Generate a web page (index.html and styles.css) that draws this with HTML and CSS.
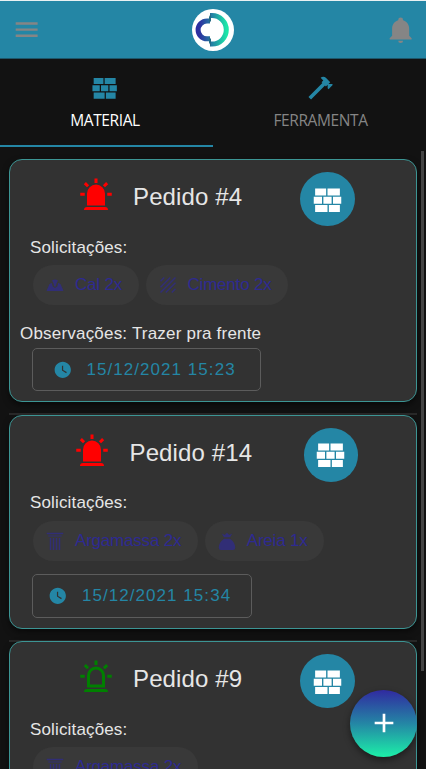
FILE: index.html
```html
<!DOCTYPE html>
<html lang="pt-BR">
<head>
<meta charset="utf-8">
<title>Pedidos</title>
<link rel="stylesheet" href="styles.css">
</head>
<body>
<svg class="defs" width="0" height="0" aria-hidden="true">
  <symbol id="wall" viewBox="0 0 24 24"><path d="M3,16H12V21H3V16M2,10H8V15H2V10M9,10H15V15H9V10M16,10H22V15H16V10M13,16H21V21H13V16M3,4H11V9H3V4M12,4H21V9H12V4Z"/></symbol>
  <symbol id="alarm" viewBox="0 0 24 24"><path d="M6,6.9L3.87,4.78L5.28,3.37L7.4,5.5L6,6.9M13,1V4H11V1H13M20.13,4.78L18,6.9L16.6,5.5L18.72,3.37L20.13,4.78M4.5,10.5V12.5H1.5V10.5H4.5M19.5,10.5H22.5V12.5H19.5V10.5M6,20H18A2,2 0 0,1 20,22H4A2,2 0 0,1 6,20M12,5A6,6 0 0,1 18,11V19H6V11A6,6 0 0,1 12,5Z"/></symbol>
  <symbol id="alarm-outline" viewBox="0 0 24 24"><path fill-rule="evenodd" d="M6,6.9L3.87,4.78L5.28,3.37L7.4,5.5L6,6.9M13,1V4H11V1H13M20.13,4.78L18,6.9L16.6,5.5L18.72,3.37L20.13,4.78M4.5,10.5V12.5H1.5V10.5H4.5M19.5,10.5H22.5V12.5H19.5V10.5M6,20H18A2,2 0 0,1 20,22H4A2,2 0 0,1 6,20M12,5A6,6 0 0,1 18,11V19H6V11A6,6 0 0,1 12,5M12,7A4,4 0 0,0 8,11V17H16V11A4,4 0 0,0 12,7Z"/></symbol>
  <symbol id="clock" viewBox="0 0 24 24"><path d="M12 2C6.5 2 2 6.5 2 12S6.5 22 12 22 22 17.5 22 12 17.5 2 12 2M16.2 16.2L11 13V7H12.5V12.2L17 14.9L16.2 16.2Z"/></symbol>
  <symbol id="pillar" viewBox="0 0 24 24"><path d="M1 1H23V3H1ZM3 4.500H21V6H3ZM5 8H7V24H5ZM9 8H11V24H9ZM13 8H15V24H13ZM17 8H19V24H17Z"/></symbol>
  <symbol id="sack" viewBox="0 0 24 24"><path d="M5 2L9 4L12 1L15 4L19 2L16 7H8ZM8 9H16C21 12 23 17 23 21Q23 24 20 24H4Q1 24 1 21C1 17 3 12 8 9Z"/></symbol>
  <symbol id="lime" viewBox="0 0 24 24"><path d="M1 19L4.500 11L7.500 9L9 14L12 16L15 14L16.500 9L19.500 11L23 19V20H1ZM8 6Q12 3 16 6L14 10L13 14H11L10 10Z"/></symbol>
  <symbol id="texture" viewBox="0 0 24 24"><path fill="none" stroke="currentColor" stroke-width="2" d="M2 22L22 2M2 15L15 2M9 22L22 9M2 7L7 2M17 22L22 17"/></symbol>
</svg>

<header class="bar">
  <svg class="icon-bar" viewBox="0 0 24 24"><path d="M3,6H21V8H3V6M3,11H21V13H3V11M3,16H21V18H3V16Z"/></svg>
  <svg class="logo" viewBox="0 0 42 42">
    <defs><linearGradient id="brand" gradientUnits="userSpaceOnUse" x1="3" y1="0" x2="38" y2="0"><stop offset="0" stop-color="#2e2aa0"/><stop offset=".15" stop-color="#2c35a0"/><stop offset=".5" stop-color="#2484a4"/><stop offset=".9" stop-color="#1ce6a8"/></linearGradient></defs>
    <circle cx="21" cy="21" r="21" fill="#fff"/>
    <path fill="none" stroke="url(#brand)" stroke-width="5" d="M18 12H15A8.900 8.900 0 0 0 15 29.800H18M18 6.500H20A14.300 14.300 0 0 1 20 35.100H18"/>
    <path fill="#246b84" d="M17 8L19 4V12L17 14ZM17 28L19 30V37.500L17 33.500Z"/>
  </svg>
  <svg class="icon-bar" viewBox="0 0 24 24"><path d="M21,19V20H3V19L5,17V11C5,7.900 7.030,5.170 10,4.290V4A2,2 0 0,1 14,4V4.290C16.970,5.170 19,7.900 19,11V17L21,19M14,21A2,2 0 0,1 10,21Z"/></svg>
</header>

<nav class="tabs">
  <div class="tab tab-active"><svg class="icon-tab"><use href="#wall"/></svg><span>MATERIAL</span></div>
  <div class="tab"><svg class="icon-tab" viewBox="0 0 24 24"><path d="M2 19.630L13.430 8.200L12.720 7.500L14.140 6.070L12 3.890C13.200 2.700 15.090 2.700 16.270 3.890L19.870 7.500L18.450 8.910H21.290L22 9.620L18.450 13.210L17.740 12.500V9.620L16.270 11.040L15.560 10.330L4.130 21.760L2 19.630Z"/></svg><span>FERRAMENTA</span></div>
</nav>

<main class="list">
  <article class="card card-first">
    <div class="head"><svg class="alarm urgent"><use href="#alarm"/></svg><h2>Pedido #4</h2><span class="avatar"><svg><use href="#wall"/></svg></span></div>
    <p class="label">Solicitações:</p>
    <div class="chips">
      <span class="chip"><svg><use href="#lime"/></svg>Cal 2x</span>
      <span class="chip"><svg><use href="#texture"/></svg>Cimento 2x</span>
    </div>
    <p class="note">Observações: Trazer pra frente</p>
    <div class="date date-wide"><svg><use href="#clock"/></svg>15/12/2021 15:23</div>
  </article>
  <hr>
  <article class="card card-second">
    <div class="head head-long"><svg class="alarm urgent"><use href="#alarm"/></svg><h2>Pedido #14</h2><span class="avatar"><svg><use href="#wall"/></svg></span></div>
    <p class="label">Solicitações:</p>
    <div class="chips">
      <span class="chip"><svg><use href="#pillar"/></svg>Argamassa 2x</span>
      <span class="chip"><svg><use href="#sack"/></svg>Areia 1x</span>
    </div>
    <div class="date"><svg><use href="#clock"/></svg>15/12/2021 15:34</div>
  </article>
  <hr>
  <article class="card card-third">
    <div class="head"><svg class="alarm calm"><use href="#alarm-outline"/></svg><h2>Pedido #9</h2><span class="avatar"><svg><use href="#wall"/></svg></span></div>
    <p class="label">Solicitações:</p>
    <div class="chips">
      <span class="chip"><svg><use href="#pillar"/></svg>Argamassa 2x</span>
    </div>
  </article>
</main>
<div class="scrollbar"></div>
<button class="fab" aria-label="Adicionar"><svg viewBox="0 0 24 24"><path d="M19,13H13V19H11V13H5V11H11V5H13V11H19V13Z"/></svg></button>
</body>
</html>
```

FILE: styles.css
```css
* { box-sizing: border-box; }
body {
  margin: 0;
  height: 769px;
  display: flex;
  flex-direction: column;
  overflow: hidden;
  position: relative;
  background: #121212;
  color: #e6e6e6;
  font: 17px/24px "Liberation Sans", Arial, sans-serif;
}
svg { display: block; flex: none; fill: currentColor; }
.defs { position: absolute; }
h2, p { margin: 0; font-weight: 400; }

.bar {
  flex: none;
  height: 59px;
  padding: 0 11px 0 12px;
  display: flex;
  align-items: center;
  justify-content: space-between;
  background: #2486a5;
  border-top: 1px solid #e9f1f3;
  border-bottom: 1px solid #1d566a;
  color: #858585;
}
.icon-bar { width: 29.300px; height: 29.300px; }
.logo { width: 42px; height: 42px; margin-right: 2px; }

.tabs { flex: none; height: 88px; display: grid; grid-template-columns: 1fr 1fr; }
.tab {
  display: flex;
  flex-direction: column;
  align-items: center;
  padding-top: 14px;
  border-bottom: 2.500px solid transparent;
  color: #858585;
  font: 15.500px/20px "Open Sans", "Noto Sans", sans-serif;
  letter-spacing: -.4px;
}
.tab:last-child { padding-left: 2px; }
.tab-active { color: #fff; border-bottom-color: #2486a5; padding-right: 3px; }
.tab span { margin-top: 8px; }
.icon-tab { width: 29.300px; height: 29.300px; color: #2486a5; }

.list { flex: 1; min-height: 0; overflow: hidden; padding: 12px 9px 0; }
.card {
  background: #323232;
  border: 1px solid #3c9594;
  border-radius: 13px;
  box-shadow: 0 3px 6px rgba(0, 0, 0, .5);
}
.card-first { height: 243px; }
.card-second { height: 214px; }
.card-third { height: 243px; }
hr { margin: 11px 0 0; border: 0; height: 2px; background: #292929; }
.card-third { margin-top: -1px; }

.head { display: flex; align-items: center; height: 79px; padding-left: 67.500px; }
.head-long { padding-left: 64px; height: 78px; }
.alarm { width: 36px; height: 36px; margin-top: -10px; }
.head-long .alarm { margin-top: -8px; }
.urgent { color: #f00; }
.calm { color: #008000; }
.head h2 { font-size: 24px; line-height: 32px; margin: -5px 0 0 19.500px; width: 110px; white-space: nowrap; letter-spacing: .12px; }
.head-long h2 { width: 123px; margin-top: -4px; }
.avatar {
  width: 54.500px;
  height: 54px;
  margin: -1px 0 0 57px;
  border-radius: 50%;
  display: flex;
  align-items: center;
  justify-content: center;
  background: #2486a5;
  color: #fff;
}
.head-long .avatar { margin-left: 51px; }
.avatar svg { width: 33px; height: 33px; }
.label { padding-left: 20px; margin-top: -3px; letter-spacing: .15px; }

.chips { display: flex; gap: 7px; padding: 5px 0 0 23px; }
.head-long ~ .chips { padding-top: 6px; }
.chip {
  height: 40px;
  padding: 0 16.500px 0 13px;
  border-radius: 20px;
  display: flex;
  align-items: center;
  background: #393939;
  color: #2e2a91;
  white-space: nowrap;
  letter-spacing: -.2px;
}
.chip svg { width: 18px; height: 18px; margin-right: 11px; opacity: .7; }
.note { padding-left: 10px; margin-top: 17px; letter-spacing: .2px; }
.date {
  width: 219.500px;
  height: 44px;
  margin: 13px 0 0 22px;
  padding-left: 15px;
  display: flex;
  align-items: center;
  border: 1px solid #5c5c5c;
  border-radius: 5px;
  color: #2486a5;
  letter-spacing: 1.050px;
  white-space: nowrap;
}
.date svg { width: 19.500px; height: 19.500px; margin-right: 14.500px; }
.date-wide { width: 229px; height: 43px; margin-top: 2px; padding-left: 19.500px; }

.scrollbar { position: absolute; left: 421px; top: 151px; width: 3px; height: 520px; background: #444; }
.fab {
  position: absolute;
  left: 350px;
  top: 689.500px;
  width: 67px;
  height: 67px;
  padding: 0;
  border: 0;
  border-radius: 50%;
  display: flex;
  align-items: center;
  justify-content: center;
  background: linear-gradient(#302aa0, #2486a5 50%, #1cf0a8);
  box-shadow: 0 3px 7px rgba(0, 0, 0, .45);
  color: #fff;
}
.fab svg { width: 32px; height: 32px; }
```
